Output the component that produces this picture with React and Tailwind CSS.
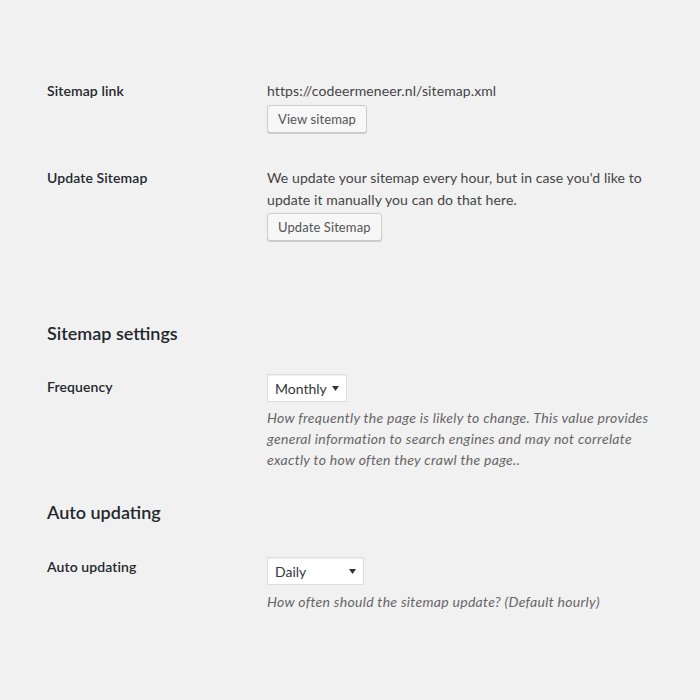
const FONT = { fontFamily: "Lato, 'Open Sans', sans-serif" };

function Button({ children }) {
  return (
    <button className="h-[28px] px-[10px] pb-[1px] rounded-[3px] border border-[#cccccc] bg-[#f7f7f7] text-[13px] leading-[26px] text-[#555555] shadow-[0_1px_0_#cccccc]">
      {children}
    </button>
  );
}

function Select({ value, width }) {
  return (
    <div className={`${width} h-[28px] flex items-center justify-between gap-[4px] pl-[7px] pr-[7px] border border-[#dddddd] bg-white shadow-[inset_0_1px_2px_rgba(0,0,0,0.07)] text-[14px] tracking-normal text-[#32373c]`}>
      <span>{value}</span>
      <svg width="7" height="5" viewBox="0 0 7 5" className="mt-[1px] shrink-0">
        <path d="M0 0 L7 0 L3.5 5 Z" fill="#333333" />
      </svg>
    </div>
  );
}

function Label({ children, className = "" }) {
  return (
    <div className={`w-[220px] shrink-0 text-[14px] font-semibold leading-[21px] text-[#23282d] ${className}`}>
      {children}
    </div>
  );
}

export default function App() {
  return (
    <div className="min-h-[700px] w-[700px] bg-[#f1f1f1] pl-[47px] pt-[80px] text-[14px] tracking-[0.1px] text-[#444444]" style={FONT}>
      {/* Sitemap link */}
      <div className="flex">
        <Label>Sitemap link</Label>
        <div>
          <p className="leading-[21px]">https://codeermeneer.nl/sitemap.xml</p>
          <div className="mt-[4px]">
            <Button>View sitemap</Button>
          </div>
        </div>
      </div>

      {/* Update sitemap */}
      <div className="flex mt-[34px]">
        <Label>Update Sitemap</Label>
        <div>
          <p className="leading-[22px]">
            We update your sitemap every hour, but in case you'd like to
            <br />
            update it manually you can do that here.
          </p>
          <div className="mt-[2px]">
            <Button>Update Sitemap</Button>
          </div>
        </div>
      </div>

      <h2 className="mt-[80px] text-[18px] font-semibold leading-[24px] tracking-normal text-[#23282d]">Sitemap settings</h2>

      {/* Frequency */}
      <div className="flex mt-[29px]">
        <Label className="pt-[2px]">Frequency</Label>
        <div>
          <Select value="Monthly" width="w-[80px]" />
          <p className="mt-[5px] italic leading-[21px] tracking-[0.3px] text-[#666666]">
            How frequently the page is likely to change. This value provides
            <br />
            general information to search engines and may not correlate
            <br />
            exactly to how often they crawl the page..
          </p>
        </div>
      </div>

      <h2 className="mt-[30px] text-[18px] font-semibold leading-[24px] tracking-normal text-[#23282d]">Auto updating</h2>

      {/* Auto updating */}
      <div className="flex mt-[32px]">
        <Label>Auto updating</Label>
        <div className="pt-[1px]">
          <Select value="Daily" width="w-[97px]" />
          <p className="mt-[6px] italic leading-[21px] tracking-[0.3px] text-[#666666]">
            How often should the sitemap update? (Default hourly)
          </p>
        </div>
      </div>
    </div>
  );
}
